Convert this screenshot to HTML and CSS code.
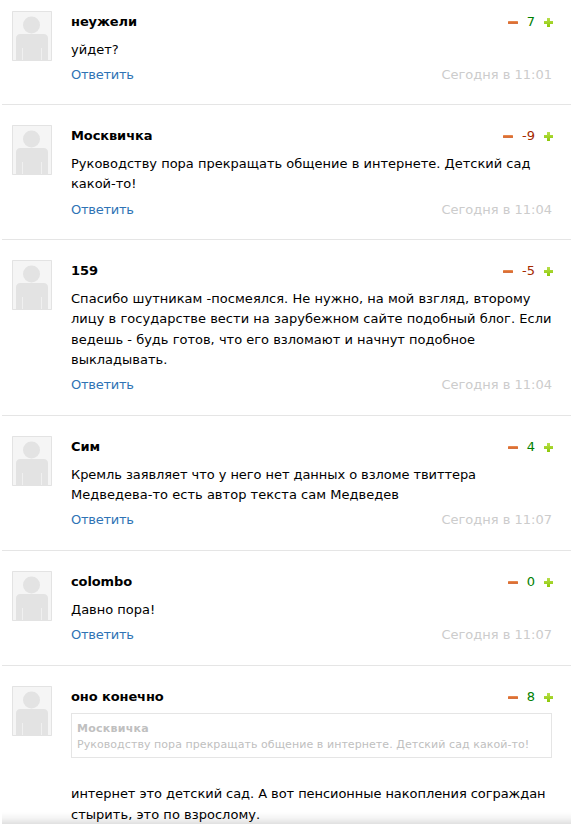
FILE: index.html
```html
<!DOCTYPE html>
<html lang="ru">
<head>
<meta charset="utf-8">
<title>Комментарии</title>
<link rel="stylesheet" href="styles.css">
</head>
<body>
<svg class="defs" width="0" height="0">
    <defs>
        <linearGradient id="red" x1="0" y1="0" x2="0" y2="1">
            <stop offset="0" stop-color="#e8935f"/>
            <stop offset="0.5" stop-color="#e07030"/>
            <stop offset="1" stop-color="#cf7349"/>
        </linearGradient>
        <linearGradient id="green" x1="0" y1="0" x2="0" y2="1">
            <stop offset="0" stop-color="#b9e04c"/>
            <stop offset="1" stop-color="#8cc808"/>
        </linearGradient>
    </defs>
    <symbol id="user" viewBox="0 0 40 50">
        <path fill="#f5f5f5" d="M0 0h40v50H0z"/>
        <circle cx="19.5" cy="14" r="8.5" fill="#e3e3e3"/>
        <path fill="#e3e3e3" d="M4 50V27.5q0-4.5 4.5-4.500h23q4.500 0 4.500 4.500V50z"/>
        <path fill="#f0f0f0" d="M10 37h1v13h-1zM29 37h1v13h-1z"/>
        <path fill="none" stroke="#e3e3e3" d="M.5.5h39v49H.5z"/>
    </symbol>
    <symbol id="minus" viewBox="0 0 10 9">
        <rect y="3" width="10" height="3" rx=".5" fill="url(#red)"/>
    </symbol>
    <symbol id="plus" viewBox="0 0 9 9">
        <path fill="url(#green)" d="M3 0h3v3h3v3H6v3H3V6H0V3h3z"/>
    </symbol>
</svg>
<div class="comments">
    <div class="comment">
        <svg class="avatar"><use href="#user"/></svg>
        <div class="body">
            <div class="head">
                <b class="name">неужели</b>
                <div class="vote"><svg class="minus"><use href="#minus"/></svg><span class="good">7</span><svg class="plus"><use href="#plus"/></svg></div>
            </div>
            <div class="text">уйдет?</div>
            <div class="foot"><a class="reply">Ответить</a><span class="date">Сегодня в 11:01</span></div>
        </div>
    </div>
    <div class="comment">
        <svg class="avatar"><use href="#user"/></svg>
        <div class="body">
            <div class="head">
                <b class="name">Москвичка</b>
                <div class="vote"><svg class="minus"><use href="#minus"/></svg><span class="bad">-9</span><svg class="plus"><use href="#plus"/></svg></div>
            </div>
            <div class="text">Руководству пора прекращать общение в интернете. Детский сад<br>какой-то!</div>
            <div class="foot"><a class="reply">Ответить</a><span class="date">Сегодня в 11:04</span></div>
        </div>
    </div>
    <div class="comment">
        <svg class="avatar"><use href="#user"/></svg>
        <div class="body">
            <div class="head">
                <b class="name">159</b>
                <div class="vote"><svg class="minus"><use href="#minus"/></svg><span class="bad">-5</span><svg class="plus"><use href="#plus"/></svg></div>
            </div>
            <div class="text"><span class="wide">Спасибо шутникам -посмеялся. Не нужно, на мой взгляд, второму<br>лицу в государстве вести на зарубежном сайте подобный блог. Если</span><br>ведешь - будь готов, что его взломают и начнут подобное<br>выкладывать.</div>
            <div class="foot"><a class="reply">Ответить</a><span class="date">Сегодня в 11:04</span></div>
        </div>
    </div>
    <div class="comment">
        <svg class="avatar"><use href="#user"/></svg>
        <div class="body">
            <div class="head">
                <b class="name">Сим</b>
                <div class="vote"><svg class="minus"><use href="#minus"/></svg><span class="good">4</span><svg class="plus"><use href="#plus"/></svg></div>
            </div>
            <div class="text"><span class="tight">Кремль заявляет что у него нет данных о взломе твиттера</span><br><span class="wide">Медведева-то есть автор текста сам Медведев</span></div>
            <div class="foot"><a class="reply">Ответить</a><span class="date">Сегодня в 11:07</span></div>
        </div>
    </div>
    <div class="comment">
        <svg class="avatar"><use href="#user"/></svg>
        <div class="body">
            <div class="head">
                <b class="name">colombo</b>
                <div class="vote"><svg class="minus"><use href="#minus"/></svg><span class="good">0</span><svg class="plus"><use href="#plus"/></svg></div>
            </div>
            <div class="text">Давно пора!</div>
            <div class="foot"><a class="reply">Ответить</a><span class="date">Сегодня в 11:07</span></div>
        </div>
    </div>
    <div class="comment">
        <svg class="avatar"><use href="#user"/></svg>
        <div class="body">
            <div class="head">
                <b class="name">оно конечно</b>
                <div class="vote"><svg class="minus"><use href="#minus"/></svg><span class="good">8</span><svg class="plus"><use href="#plus"/></svg></div>
            </div>
            <div class="quote"><b>Москвичка</b><br>Руководству пора прекращать общение в интернете. Детский сад какой-то!</div>
            <div class="text"><span class="tight">интернет это детский сад. А вот пенсионные накопления сограждан</span><br><span class="wide">стырить, это по взрослому.</span></div>
        </div>
    </div>
</div>
<div class="shade"></div>
</body>
</html>
```
FILE: styles.css
```css
body {
    margin: 0;
    height: 824px;
    overflow: hidden;
    background: #fff;
    color: #000;
    font: 13px/20.3px Verdana, "DejaVu Sans", sans-serif;
}
.defs {position: absolute;}
.comments {
    margin-left: 2px;
}
.comment {
    display: flex;
    padding: 20px 19px 19.2px 10px;
    border-bottom: 1px solid #e5e5e5;
}
.comment:first-child {
    padding-top: 10.8px;
    padding-bottom: 18.7px;
}
.comment:last-child {border: none;}
.avatar {
    flex: none;
    width: 40px;
    height: 50px;
    margin-right: 19px;
}
.body {
    flex: 1;
    min-width: 0;
    padding-top: 1.2px;
    white-space: nowrap;
}
.head, .foot {
    display: flex;
    justify-content: space-between;
}
.name {letter-spacing: -0.1px;}
.vote {
    display: flex;
    align-items: center;
    margin-right: -1px;
}
.vote span {margin: 0 9px;}
.minus {width: 10px; height: 9px;}
.plus {width: 9px; height: 9px;}
.good {color: #008000;}
.bad {color: #a52a00;}
.text {margin: 7.3px 0 5.1px;}
.tight {letter-spacing: -0.06px;}
.wide {letter-spacing: 0.03px;}
.reply {
    color: #2f73b5;
    letter-spacing: -0.25px;
}
.date {color: #ccc;}
.foot {margin-bottom: 0.2px;}
.quote {
    margin: 5.5px 0 26.5px;
    padding: 7px 5px 4px;
    border: 1px solid #e5e5e5;
    color: #c0c0c0;
    font-size: 11px;
    line-height: 16px;
    letter-spacing: 0.065px;
}
.quote b {letter-spacing: 0.25px;}
.shade {
    position: fixed;
    left: 2px;
    right: 0;
    bottom: 0;
    height: 12px;
    background: linear-gradient(rgba(0,0,0,0), rgba(0,0,0,0.04) 50%, rgba(0,0,0,0.12));
}
```
